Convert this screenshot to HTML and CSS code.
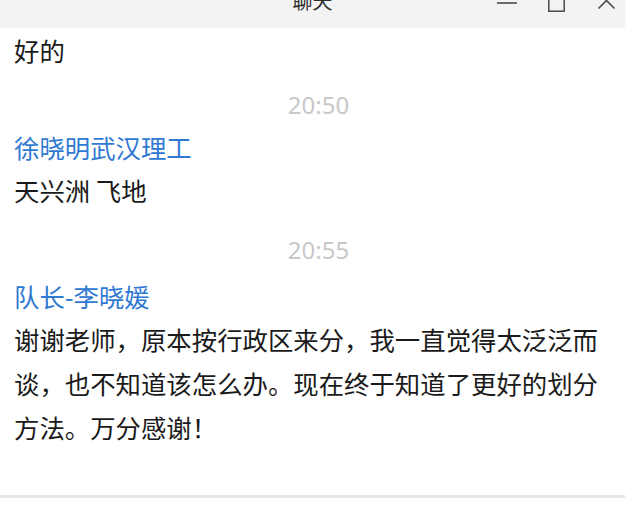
FILE: index.html
```html
<!DOCTYPE html>
<html lang="zh-CN">
<head>
<meta charset="utf-8">
<title>聊天</title>
<link rel="stylesheet" href="styles.css">
</head>
<body>
<div class="window">
  <header class="titlebar">
    <div class="title">聊天</div>
    <div class="controls">
      <svg class="ctl ctl-min" width="20" height="20" viewBox="0 0 20 20"><line x1="0" y1="11" x2="20" y2="11" stroke="#4a4a4a" stroke-width="1.6"/></svg>
      <svg class="ctl ctl-max" width="17" height="20" viewBox="0 0 17 20"><rect x="0.8" y="3" width="15.4" height="16.2" fill="none" stroke="#4a4a4a" stroke-width="1.5"/></svg>
      <svg class="ctl ctl-close" width="17" height="20" viewBox="0 0 17 20"><path d="M0.5 0.5 L16.5 16.5 M16.5 0.5 L0.5 16.5" stroke="#4a4a4a" stroke-width="1.6" fill="none"/></svg>
    </div>
  </header>
  <main class="chat">
    <p class="msg msg-cut">好的</p>
    <div class="time time-first">20:50</div>
    <section class="group">
      <div class="name">徐晓明武汉理工</div>
      <p class="msg">天兴洲 飞地</p>
    </section>
    <div class="time">20:55</div>
    <section class="group group-late">
      <div class="name">队长-李晓媛</div>
      <p class="msg">谢谢老师，原本按行政区来分，我一直觉得太泛泛而谈，也不知道该怎么办。现在终于知道了更好的划分方法。万分感谢！</p>
    </section>
  </main>
  <div class="divider"></div>
  <div class="input"></div>
</div>
</body>
</html>
```
FILE: styles.css
```css
html, body {
  margin: 0;
  padding: 0;
  background: #ffffff;
}

.window {
  width: 625px;
  height: 507px;
  display: flex;
  flex-direction: column;
  overflow: hidden;
  font-family: "Noto Sans CJK SC", "Noto Sans", sans-serif;
}

.titlebar {
  height: 28px;
  flex: 0 0 28px;
  background: #f3f3f3;
  display: grid;
  grid-template-columns: 1fr auto 1fr;
  align-items: start;
  overflow: hidden;
}

.title {
  grid-column: 2;
  font-size: 20px;
  line-height: 20px;
  margin-top: -9px;
  color: #2b2b2b;
}

.controls {
  grid-column: 3;
  justify-self: end;
  display: flex;
  align-items: flex-start;
  padding-right: 10px;
  margin-top: -8px;
}

.ctl {
  display: block;
  overflow: visible;
}

.ctl-max {
  margin-left: 31px;
}

.ctl-close {
  margin-left: 33px;
}

.chat {
  flex: 1 1 0;
  min-height: 0;
  padding: 0 20px 0 14px;
  overflow: hidden;
  font-size: 25.4px;
  color: #1a1a1a;
}

.msg {
  margin: 0;
  line-height: 44px;
}

.time {
  font-family: "Noto Sans", "Open Sans", sans-serif;
  font-size: 24px;
  line-height: 40px;
  text-align: center;
  color: #c8c8c8;
  margin-top: 18px;
  padding-left: 18px;
}

.time-first {
  margin-top: 13px;
}

.group {
  margin-top: 1px;
}

.group-late {
  margin-top: 5px;
}

.name {
  color: #3079d3;
  line-height: 42px;
}

.divider {
  flex: 0 0 3px;
  background: #e6e6e6;
}

.input {
  flex: 0 0 9px;
  background: #ffffff;
}
```
